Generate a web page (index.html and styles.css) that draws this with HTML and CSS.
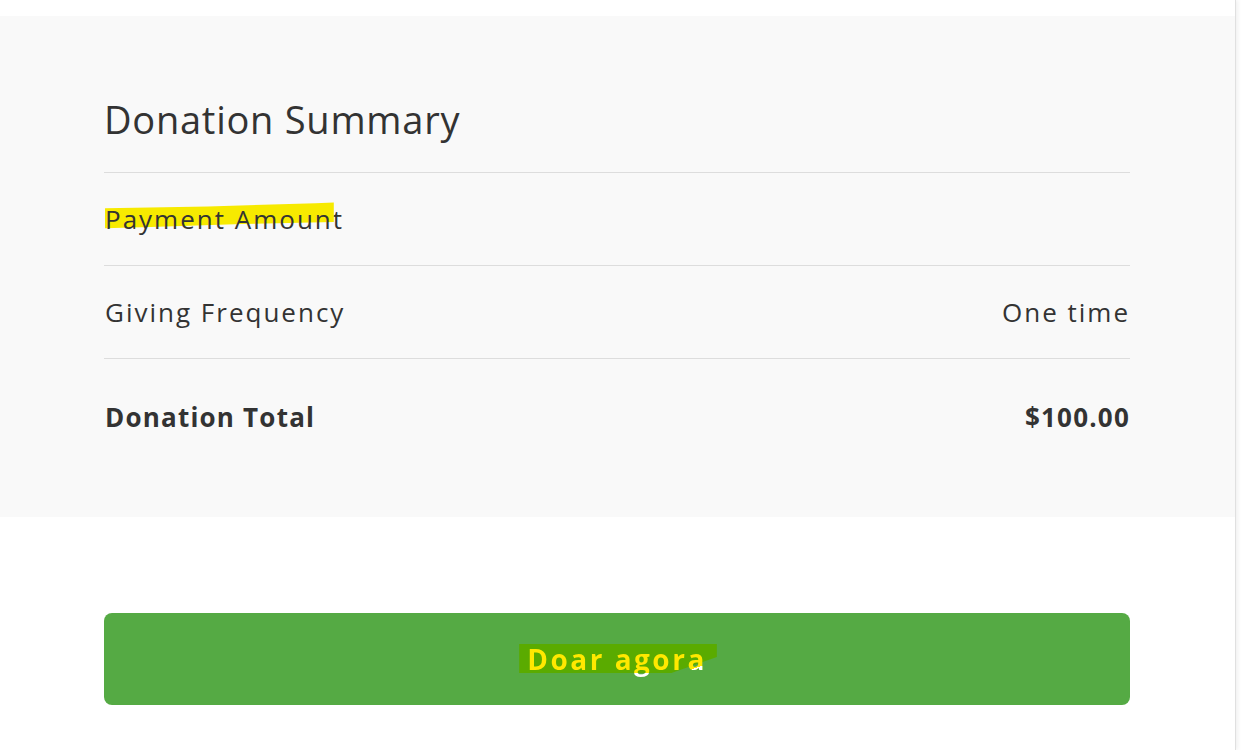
FILE: index.html
```html
<!DOCTYPE html>
<html lang="en">
<head>
    <meta charset="UTF-8">
    <meta name="viewport" content="width=device-width, initial-scale=1.0">
    <title>Donation Summary</title>
    <link rel="stylesheet" href="styles.css">
</head>
<body>
    <div class="page">
        <section class="summary">
            <h2 class="summary-title">Donation Summary</h2>

            <div class="summary-row">
                <span><span class="marker">Payment Amoun</span>t</span>
                <span class="value"></span>
            </div>
            <div class="summary-row">
                <span>Giving Frequency</span>
                <span class="value">One time</span>
            </div>
            <div class="summary-row total">
                <span>Donation Total</span>
                <span class="value">$100.00</span>
            </div>
        </section>

        <div class="actions">
            <button type="button" class="donate-btn">
                <span class="btn-label">Doar agora</span>
            </button>
        </div>
    </div>
</body>
</html>
```

FILE: styles.css
```css
body {
    margin: 0;
    background-color: #ffffff;
    color: #333333;
    font-family: 'Open Sans', 'Liberation Sans', sans-serif;
    overflow: hidden;
}

.page {
    width: 1236px;
    height: 750px;
    padding-top: 16px;
    box-sizing: border-box;
    border-right: 1px solid #e0e0e0;
    box-shadow: 2px 0 4px rgba(0, 0, 0, 0.06);
}

.summary {
    background-color: #f9f9f9;
    padding: 79px 105px 42px 104px;
}

.summary-title {
    margin: 0;
    font-size: 38px;
    font-weight: 400;
    letter-spacing: 0.75px;
    line-height: 48px;
    padding-bottom: 29px;
    border-bottom: 1px solid #dddddd;
}

.summary-row {
    display: flex;
    justify-content: space-between;
    align-items: center;
    height: 92px;
    padding: 0 0 0 1px;
    font-size: 26px;
    letter-spacing: 2px;
    border-bottom: 1px solid #dddddd;
}

.summary-row.total {
    height: 116px;
    border-bottom: none;
    font-weight: 700;
    letter-spacing: 1.2px;
}

.marker {
    position: relative;
    z-index: 0;
}

.marker::before {
    content: "";
    position: absolute;
    left: 0;
    right: -1px;
    top: 0;
    bottom: 0;
    z-index: -1;
    background-color: #f7ea00;
    clip-path: polygon(0 20%, 45% 15%, 92% 6%, 100% 4%, 100% 58%, 60% 64%, 20% 72%, 0 76%);
}

.actions {
    padding: 96px 105px 0 104px;
}

.donate-btn {
    display: flex;
    justify-content: center;
    align-items: center;
    position: relative;
    z-index: 0;
    width: 100%;
    height: 92px;
    border: none;
    border-radius: 8px;
    background-color: #55aa44;
    font-family: 'Open Sans', 'Liberation Sans', sans-serif;
    font-size: 28px;
    font-weight: 700;
    letter-spacing: 2.5px;
    cursor: pointer;
}

/* text is yellow where the highlight covers it, white below */
.btn-label {
    position: relative;
    display: inline-block;
    line-height: 38px;
    color: transparent;
    background-image:
        linear-gradient(160deg, transparent 0 84px, #ffffff 84px),
        linear-gradient(to bottom, #ffe800 0 33px, #ffffff 33px);
    background-size: 200px 38px, 100% 100%;
    background-position: 0 0, 0 0;
    background-repeat: no-repeat;
    -webkit-background-clip: text;
    background-clip: text;
}

.btn-label::before {
    content: "";
    position: absolute;
    left: -8px;
    right: -10px;
    top: 4px;
    height: 29px;
    z-index: -1;
    background-color: #5aab00;
    clip-path: polygon(0 0, 100% 0, 100% 45%, 77% 100%, 0 100%);
}
```
